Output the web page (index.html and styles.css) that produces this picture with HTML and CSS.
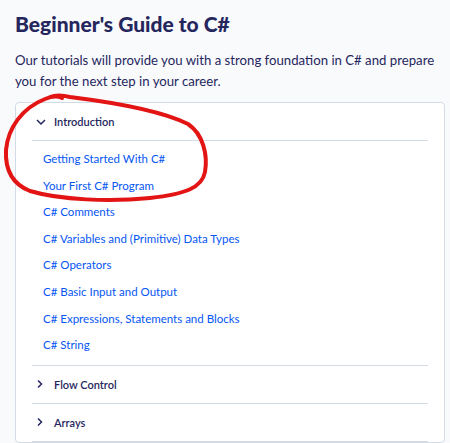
FILE: index.html
```html
<!DOCTYPE html>
<html lang="en">
<head>
    <meta charset="UTF-8">
    <meta name="viewport" content="width=device-width, initial-scale=1.0">
    <title>Beginner's Guide to C#</title>
    <link rel="stylesheet" href="styles.css">
</head>
<body>
    <div class="page">
        <h1>Beginner's Guide to C#</h1>
        <p class="intro">Our tutorials will provide you with a strong foundation in C# and prepare you for the next step in your career.</p>

        <div class="toc">
            <!-- Introduction (open) -->
            <div class="section">
                <div class="section-head">
                    <svg class="chevron" width="10" height="10" viewBox="0 0 10 10"><path d="M1 3 L5 7 L9 3" fill="none" stroke="#25265e" stroke-width="1.5"/></svg>
                    <span>Introduction</span>
                </div>
                <ul class="links">
                    <li><a href="#">Getting Started With C#</a></li>
                    <li><a href="#">Your First C# Program</a></li>
                    <li><a href="#">C# Comments</a></li>
                    <li><a href="#">C# Variables and (Primitive) Data Types</a></li>
                    <li><a href="#">C# Operators</a></li>
                    <li><a href="#">C# Basic Input and Output</a></li>
                    <li><a href="#">C# Expressions, Statements and Blocks</a></li>
                    <li><a href="#">C# String</a></li>
                </ul>
            </div>

            <div class="section">
                <div class="section-head">
                    <svg class="chevron" width="10" height="10" viewBox="0 0 10 10"><path d="M2 1.5 L5.5 5 L2 8.5" fill="none" stroke="#25265e" stroke-width="1.5"/></svg>
                    <span>Flow Control</span>
                </div>
            </div>

            <div class="section">
                <div class="section-head">
                    <svg class="chevron" width="10" height="10" viewBox="0 0 10 10"><path d="M2 1.5 L5.5 5 L2 8.5" fill="none" stroke="#25265e" stroke-width="1.5"/></svg>
                    <span>Arrays</span>
                </div>
            </div>
        </div>

        <!-- hand-drawn highlight -->
        <svg class="scribble" width="450" height="443" viewBox="0 0 450 443">
            <path d="M50 97 C 55 95, 62 95, 70 97 C 110 102, 160 110, 188 124 C 203 134, 208 155, 205 172 C 202 188, 185 194, 150 198 C 110 202, 60 200, 30 191 C 12 184, 5 170, 6 150 C 8 128, 22 108, 45 99 C 52 96, 58 96, 62 98" fill="none" stroke="#e31414" stroke-width="4" stroke-linecap="round"/>
        </svg>
    </div>
</body>
</html>
```

FILE: styles.css
```css
body {
    margin: 0;
    background-color: #f9fafc;
    font-family: Lato, "Noto Sans", sans-serif;
    color: #25265e;
}
.page {
    position: relative;
    padding: 10px 5px 0 15px;
    height: 443px;
    overflow: hidden;
    box-sizing: border-box;
}
h1 {
    margin: 0;
    font-size: 21px;
    line-height: 28px;
    font-weight: 900;
}
.intro {
    margin: 12px 0 0;
    font-size: 13.2px;
    line-height: 21px;
}
.toc {
    margin-top: 10px;
    width: 430px;
    box-sizing: border-box;
    background-color: #fff;
    border: 1px solid #d3dce6;
    border-radius: 4px;
    padding: 0 16px;
}
.section-head {
    display: flex;
    align-items: center;
    height: 37px;
    padding-left: 4px;
    border-bottom: 1px solid #d3dce6;
    font-size: 11px;
    font-weight: 600;
}
.chevron {
    margin-right: 8px;
}
.links {
    list-style: none;
    margin: 0;
    padding: 5px 0 6px 11px;
    border-bottom: 1px solid #d3dce6;
}
.links li {
    line-height: 26.6px;
    font-size: 11.5px;
}
.links a {
    color: #0556f3;
    text-decoration: none;
}
.scribble {
    position: absolute;
    top: 0;
    left: 0;
    pointer-events: none;
}
```
